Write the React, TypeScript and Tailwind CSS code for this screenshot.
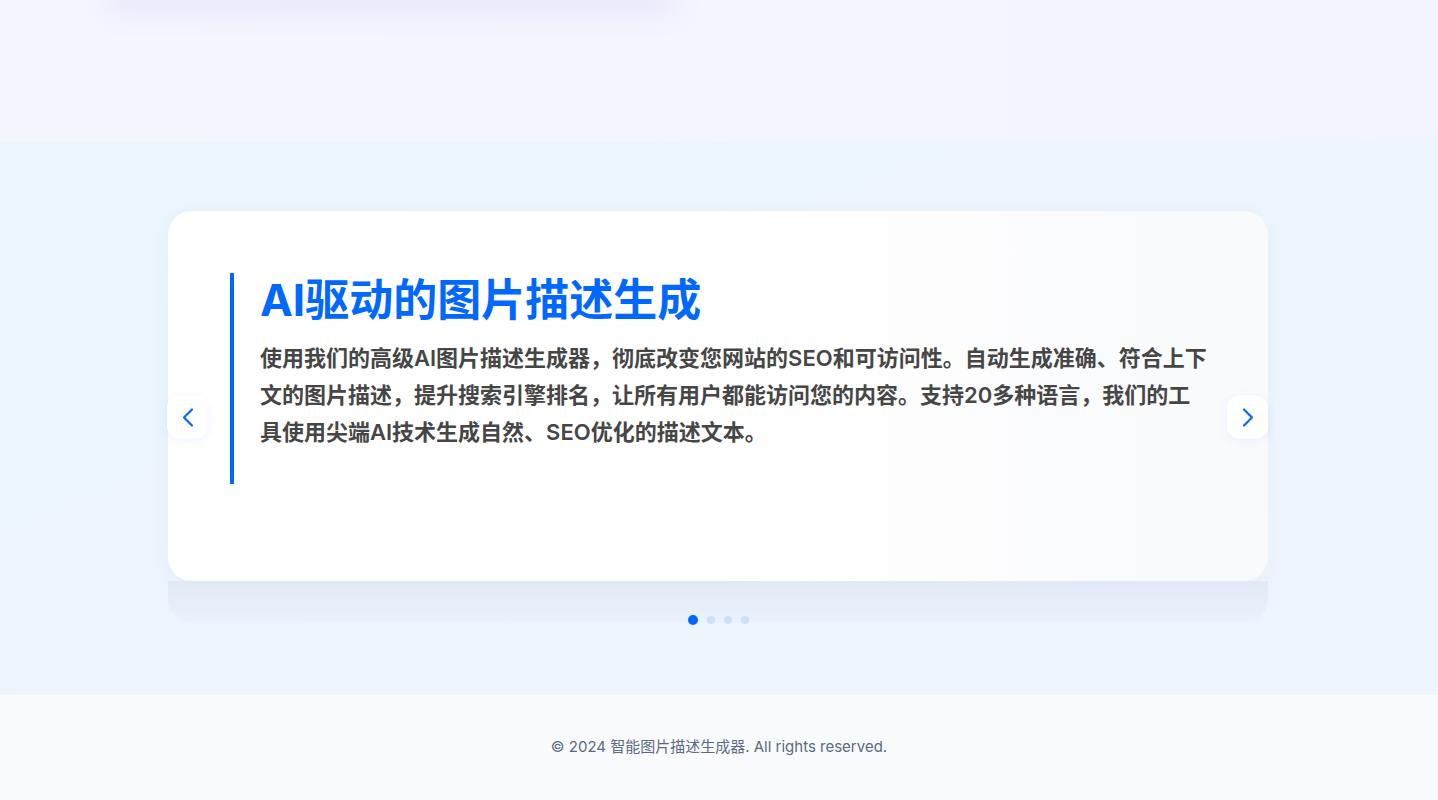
import { ChevronLeft, ChevronRight } from 'lucide-react';

const font = { fontFamily: '"Inter", "Noto Sans CJK SC", sans-serif' };

export default function App() {
  const slides = [0, 1, 2, 3];
  const active = 0;

  return (
    <div className="min-h-screen" style={font}>
      {/* tail of the section above */}
      <section className="h-[141px] overflow-hidden bg-gradient-to-r from-[#f4f7fe] to-[#f3f5fe]">
        <div className="ml-[104px] -mt-[26px] h-[20px] w-[572px] rounded-2xl bg-[#f1effc] shadow-[0_14px_32px_rgba(124,92,230,0.15)]" />
      </section>

      {/* feature carousel */}
      <section className="flex h-[554px] items-start justify-center bg-gradient-to-br from-[#eaf5fe] to-[#eff5fe] pt-[70px]">
        <div className="relative -ml-[2px] w-[1100px]">
          <div className="h-[370px] rounded-3xl bg-gradient-to-r from-white via-white to-[#f9fafc] pl-[62px] pr-[57px] pt-[62px] shadow-[0_4px_20px_rgba(30,64,120,0.04)]">
            <div className="h-[211px] border-l-4 border-[#0068ff] pl-[26px]">
              <h2 className="mb-[13px] text-[44px] font-bold leading-[54px] text-[#0068ff]">
                AI驱动的图片描述生成
              </h2>
              <p className="text-[22px] font-semibold leading-[37px] text-[#464646]">
                使用我们的高级AI图片描述生成器，彻底改变您网站的SEO和可访问性。自动生成准确、符合上下文的图片描述，提升搜索引擎排名，让所有用户都能访问您的内容。支持20多种语言，我们的工具使用尖端AI技术生成自然、SEO优化的描述文本。
              </p>
            </div>
          </div>
          <div className="h-[42px] rounded-b-3xl bg-gradient-to-b from-[#e1e9f4] to-[#eaf3fd]">
            <div className="flex items-center justify-center gap-[9px] pt-[34px]">
              {slides.map(i => (
                <span
                  key={i}
                  className={
                    i === active
                      ? 'h-[10px] w-[10px] rounded-full bg-[#0068ff]'
                      : 'h-[8px] w-[8px] rounded-full bg-[#cfe0fa]'
                  }
                />
              ))}
            </div>
          </div>

          <button className="absolute left-[-1px] top-1/2 flex h-[43px] w-[41px] -translate-y-1/2 items-center justify-center rounded-xl bg-white shadow-[0_2px_10px_rgba(0,104,255,0.08)]">
            <ChevronLeft className="h-[32px] w-[32px] text-[#0068ff]" strokeWidth={1.6} />
          </button>
          <button className="absolute right-0 top-1/2 flex h-[43px] w-[41px] -translate-y-1/2 items-center justify-center rounded-xl bg-white shadow-[0_2px_10px_rgba(0,104,255,0.08)]">
            <ChevronRight className="h-[32px] w-[32px] text-[#0068ff]" strokeWidth={1.6} />
          </button>
        </div>
      </section>

      <footer className="flex h-[105px] items-center justify-center bg-[#f9fbfe]">
        <p className="text-[15px] text-[#5a6a85]">© 2024 智能图片描述生成器. All rights reserved.</p>
      </footer>
    </div>
  );
}
